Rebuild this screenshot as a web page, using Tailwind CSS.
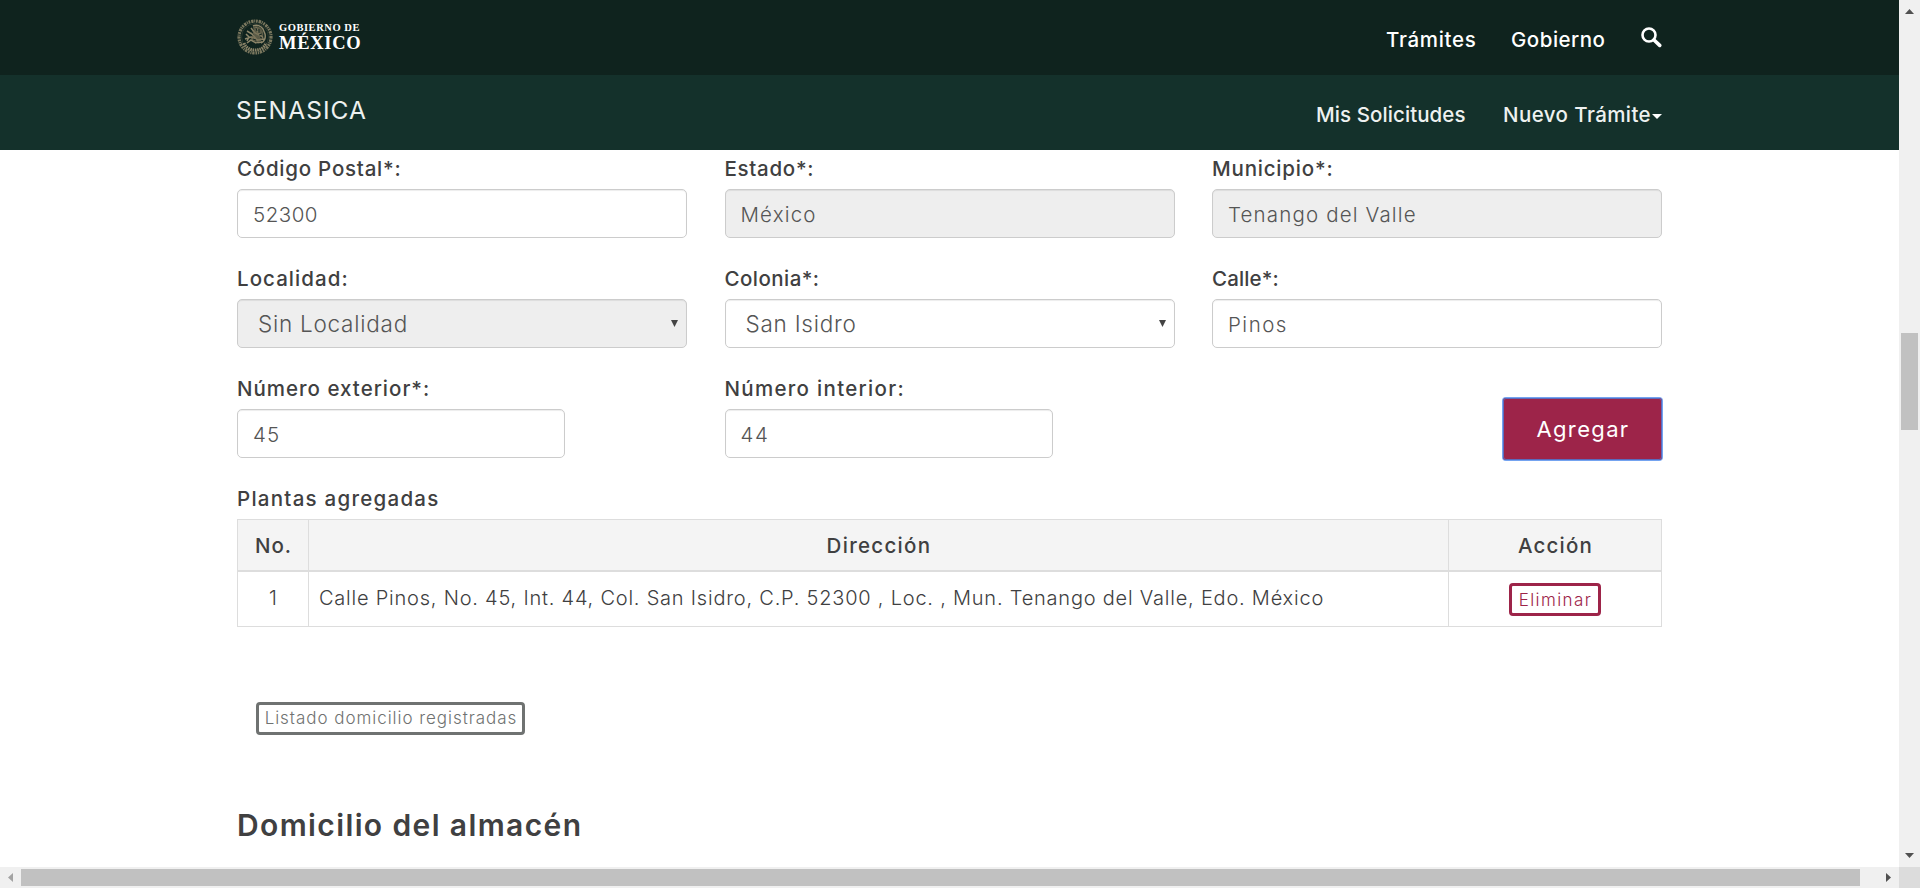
<!DOCTYPE html>
<html lang="es">
<head>
<meta charset="utf-8">
<title>SENASICA</title>
<script src="https://cdn.jsdelivr.net/npm/@tailwindcss/browser@4"></script>
</head>
<body class="h-[888px] w-[1920px] overflow-hidden bg-white font-['Inter',sans-serif] text-[#404041]">
<div class="grid h-[888px] grid-cols-[1899px_21px] grid-rows-[867px_21px]">
  <div class="overflow-hidden">
    <header class="h-[75px] bg-[#0f231e] pl-[237px] pr-[237px] text-white">
      <div class="flex h-full items-center">
        <svg class="h-9 w-9 -translate-y-px" viewBox="0 0 36 36" fill="none">
          <g stroke="#8d866a">
            <circle cx="18" cy="18" r="16" stroke-width="3.2" stroke-dasharray="1.7 .9 2.4 .7 1.1 .8" opacity=".85"/>
            <circle cx="18" cy="18" r="13.4" stroke-width=".5" opacity=".45"/>
            <path d="M7 24c2 5 6 7 11 7s9-2 11-7" stroke-width="3" stroke-dasharray="1.5 .8"/>
            <path d="M16 7c4-2 8 0 10 3l2 5c1 4-1 8-4 9M10 12l5 3 6 7M14 9l4 5 8 4M8 20l6-2 7 3 6-1M19 8l2 5 5 6M10 24l4-3 5 3 6-1M9 15l3 3-2 4" stroke-width="1.5"/>
          </g>
          <path d="M16 8c5-2 9 1 10 5s0 8-4 10c-4 0-8-2-9-5l4-2-3-3 3-1z" fill="#756f56" opacity=".75"/>
          <path d="M19 9l1 3m2-2 0 4m3 1-3 1m-8-4 2 2m0 6 3 1m4-3 2 1m-12 6 2 0m4 0 2 0" stroke="#0f231e" stroke-width=".9"/>
        </svg>
        <div class="ml-[6px] flex -translate-y-px flex-col font-['Liberation_Serif',serif] font-bold">
          <span class="text-[10.5px] leading-[12px] tracking-[0.55px]">GOBIERNO DE</span>
          <span class="text-[18.5px] leading-[18px] tracking-[0.7px]">MÉXICO</span>
        </div>
        <nav class="ml-auto flex items-center pt-1 text-[20.5px] font-[450] leading-7">
          <a class="w-[125px] tracking-[0.7px]">Trámites</a>
          <a class="w-[130px] tracking-[0.5px]">Gobierno</a>
          <svg class="h-[21px] w-[21px] -translate-y-[2px]" viewBox="0 0 21 21" fill="none" stroke="#fff"><circle cx="8" cy="8" r="6.5" stroke-width="2.6"/><path d="M13 13l5.700 5.400" stroke-width="3.6" stroke-linecap="round"/></svg>
        </nav>
      </div>
    </header>
    <div class="flex h-[75px] items-center bg-[#14312b] pl-[236px] pr-[237px] text-white">
      <span class="-translate-y-[3px] text-[24.5px] leading-8 tracking-[1.08px] text-[#eef1f0]">SENASICA</span>
      <nav class="ml-auto flex items-center pt-1 text-[20.5px] font-[450] leading-7 text-[#eef1f0]">
        <a class="w-[187px] tracking-[0.08px]">Mis Solicitudes</a>
        <a class="flex w-[159px] items-center justify-between tracking-[0.42px]">Nuevo Trámite<svg class="mt-1 h-[5px] w-[10px]" viewBox="0 0 10 5"><path d="M0 0h10L5 5z" fill="#fff"/></svg></a>
      </nav>
    </div>

    <main class="ml-[237px] w-[1425px]">
      <form class="grid grid-cols-[450px_450px_450px] gap-x-[37.5px] text-[20.5px] font-[450]">
        <div class="h-[110px]"><label class="block h-[39px] pt-[5px] leading-7 tracking-[0.76px]">Código Postal*:</label><input class="block h-[49px] w-full rounded-[5px] border border-[#ccc] px-[15px] pt-[2px] text-[20.5px] font-light tracking-[0.5px] text-[#555] shadow-[inset_0_1px_1px_rgba(0,0,0,0.075)]" value="52300"></div>
        <div class="h-[110px]"><label class="block h-[39px] pt-[5px] leading-7 tracking-[0.7px]">Estado*:</label><input class="block h-[49px] w-full rounded-[5px] border border-[#ccc] bg-[#eee] px-[15px] pt-[2px] text-[20.5px] font-light tracking-[1.15px] text-[#555] shadow-[inset_0_1px_1px_rgba(0,0,0,0.075)]" value="México" readonly></div>
        <div class="h-[110px]"><label class="block h-[39px] pt-[5px] leading-7 tracking-[0.8px]">Municipio*:</label><input class="block h-[49px] w-full rounded-[5px] border border-[#ccc] bg-[#eee] px-[15px] pt-[2px] text-[20.5px] font-light tracking-[1.15px] text-[#555] shadow-[inset_0_1px_1px_rgba(0,0,0,0.075)]" value="Tenango del Valle" readonly></div>

        <div class="h-[110px]"><label class="block h-[39px] pt-[5px] leading-7 tracking-[1.05px]">Localidad:</label>
          <div class="flex h-[49px] items-center justify-between rounded-[5px] border border-[#ccc] bg-[#eee] pl-5 pr-2 text-[22.5px] font-light tracking-[0.75px] text-[#555] shadow-[inset_0_1px_1px_rgba(0,0,0,0.075)]">Sin Localidad<svg class="h-[7px] w-[7px]" viewBox="0 0 7 7"><path d="M0 0h7L3.500 7z" fill="#444"/></svg></div></div>
        <div class="h-[110px]"><label class="block h-[39px] pt-[5px] leading-7 tracking-[0.45px]">Colonia*:</label>
          <div class="flex h-[49px] items-center justify-between rounded-[5px] border border-[#ccc] pl-5 pr-2 text-[22.5px] font-light tracking-[0.75px] text-[#555] shadow-[inset_0_1px_1px_rgba(0,0,0,0.075)]">San Isidro<svg class="h-[7px] w-[7px]" viewBox="0 0 7 7"><path d="M0 0h7L3.500 7z" fill="#444"/></svg></div></div>
        <div class="h-[110px]"><label class="block h-[39px] pt-[5px] leading-7 tracking-[0.12px]">Calle*:</label><input class="block h-[49px] w-full rounded-[5px] border border-[#ccc] px-[15px] pt-[2px] text-[20.5px] font-light tracking-[1.5px] text-[#555] shadow-[inset_0_1px_1px_rgba(0,0,0,0.075)]" value="Pinos"></div>

        <div class="h-[110px]"><label class="block h-[39px] pt-[5px] leading-7 tracking-[1px]">Número exterior*:</label><input class="block h-[49px] w-[328px] rounded-[5px] border border-[#ccc] px-[15px] pt-[2px] text-[20.5px] font-light tracking-[1px] text-[#555] shadow-[inset_0_1px_1px_rgba(0,0,0,0.075)]" value="45"></div>
        <div class="h-[110px]"><label class="block h-[39px] pt-[5px] leading-7 tracking-[1.3px]">Número interior:</label><input class="block h-[49px] w-[328px] rounded-[5px] border border-[#ccc] px-[15px] pt-[2px] text-[20.5px] font-light tracking-[1.5px] text-[#555] shadow-[inset_0_1px_1px_rgba(0,0,0,0.075)]" value="44"></div>
        <div class="flex h-[110px] justify-end pt-[28px]"><button type="button" class="h-[62px] w-[159px] rounded-[3px] bg-[#9d2449] pl-[1px] text-[22px] font-normal tracking-[1.35px] text-white ring-1 ring-[#74a3f0] outline outline-1 -outline-offset-1 outline-[#5a6bbd]">Agregar</button></div>
      </form>

      <div class="h-[39px] pt-[5px] text-[20.5px] font-[450] leading-7 tracking-[1.26px]">Plantas agregadas</div>
      <div class="border border-[#ddd] text-[20px]">
        <div class="grid h-[52px] grid-cols-[71px_1140px_212px] divide-x divide-[#ddd] border-b-2 border-[#ddd] bg-[#f4f4f4] text-center text-[20.5px] font-[450] leading-[52px]">
          <div class="pl-px tracking-[1px]">No.</div><div class="pl-px tracking-[1.3px]">Dirección</div><div class="pl-px tracking-[1.2px]">Acción</div>
        </div>
        <div class="grid h-[54px] grid-cols-[71px_1140px_212px] divide-x divide-[#ddd] font-light leading-[52px]">
          <div class="text-center">1</div>
          <div class="whitespace-nowrap pl-[10px] tracking-[0.78px]">Calle Pinos, No. 45, Int. 44, Col. San Isidro, C.P. 52300 , Loc. , Mun. Tenango del Valle, Edo. México</div>
          <div class="flex justify-center pt-[11px]"><button class="h-[33px] w-[92px] rounded-[4px] border-3 border-[#9d2449] pl-px pt-px text-[17px] leading-[26px] tracking-[1.4px] text-[#9d2449]">Eliminar</button></div>
        </div>
      </div>
      <button class="ml-[19px] mt-[75px] block h-[33px] w-[269px] whitespace-nowrap rounded-[4px] border-3 border-[#6f7271] pl-px text-[17px] font-light leading-[27px] tracking-[0.96px] text-[#6f7271]">Listado domicilio registradas</button>
      <h3 class="mt-[70px] text-[30px] font-semibold leading-[41px] tracking-[1.38px]">Domicilio del almacén</h3>
    </main>
  </div>

  <div class="flex flex-col items-center bg-[#f0f0f0]">
    <svg class="mt-[9px] h-[5px] w-[9px]" viewBox="0 0 9 5"><path d="M4.500 0L9 5H0z" fill="#505050"/></svg>
    <div class="mt-[319px] h-[97px] w-[17px] bg-[#c1c1c1]"></div>
    <svg class="mb-[9px] mt-auto h-[5px] w-[9px]" viewBox="0 0 9 5"><path d="M0 0h9L4.500 5z" fill="#505050"/></svg>
  </div>
  <div class="flex items-center bg-[#f0f0f0]">
    <svg class="ml-[8px] h-[9px] w-[5px]" viewBox="0 0 5 9"><path d="M5 0v9L0 4.500z" fill="#a3a3a3"/></svg>
    <div class="ml-[8px] h-[17px] w-[1839px] bg-[#c1c1c1]"></div>
    <svg class="ml-[26px] h-[9px] w-[5px]" viewBox="0 0 5 9"><path d="M0 0v9l5-4.500z" fill="#505050"/></svg>
  </div>
  <div class="bg-[#dcdcdc]"></div>
</div>
</body>
</html>
